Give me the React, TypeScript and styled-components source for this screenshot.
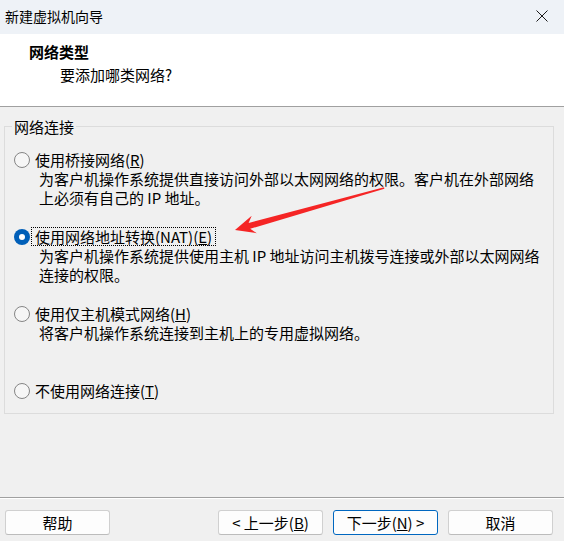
import React from 'react';
import styled, { createGlobalStyle } from 'styled-components';

const GlobalStyle = createGlobalStyle`
  html, body { margin: 0; padding: 0; background: #f0f0f0; }
  body { font-family: "Noto Sans CJK SC", "Noto Sans", sans-serif; color: #000; }
  * { box-sizing: border-box; }
`;

const Window = styled.div`
  position: relative;
  width: 564px;
  height: 541px;
  display: flex;
  flex-direction: column;
  background: #f0f0f0;
  overflow: hidden;
`;

const TitleBar = styled.div`
  height: 34px;
  flex: none;
  display: flex;
  align-items: center;
  justify-content: space-between;
  padding: 0 16px 2px 5px;
  background: #eef2f7;
  font-size: 14px;
  line-height: 18px;
`;

const CloseIcon = styled.svg`
  width: 12px;
  height: 12px;
  display: block;
`;

const Header = styled.div`
  height: 73px;
  flex: none;
  background: #fff;
  border-bottom: 1px solid #a0a0a0;
  padding: 8px 0 0 29px;
`;

const HeaderTitle = styled.div`
  font-size: 15px;
  font-weight: 700;
  line-height: 19px;
`;

const HeaderSub = styled.div`
  font-size: 15px;
  line-height: 19px;
  margin: 4px 0 0 31px;
`;

const Body = styled.div`
  flex: 1;
  padding: 10px 10px 0 4px;
`;

const Group = styled.fieldset`
  margin: 0;
  padding: 0;
  min-width: 0;
  border: 1px solid #dcdcdc;
`;

const Legend = styled.legend`
  margin-left: 7px;
  padding: 0 2px;
  font-size: 15px;
  line-height: 19px;
`;

const OptionList = styled.div`
  display: flex;
  flex-direction: column;
  gap: 20px;
  padding: 14px 0 13px 9px;
`;

const Option = styled.div`
  display: flex;
  flex-direction: column;
  min-height: 57px;
  &:last-child { min-height: 0; }
`;

const OptionRow = styled.div`
  display: flex;
  align-items: center;
  height: 19px;
`;

const Radio = styled.span<{ $checked?: boolean }>`
  position: relative;
  flex: none;
  width: 16px;
  height: 16px;
  border-radius: 50%;
  background: ${p => (p.$checked ? '#005fb8' : '#f6f6f6')};
  border: ${p => (p.$checked ? 'none' : '1px solid #858585')};
  &::after {
    content: '';
    display: ${p => (p.$checked ? 'block' : 'none')};
    position: absolute;
    inset: 5px;
    border-radius: 50%;
    background: #fff;
  }
`;

const OptionLabel = styled.span<{ $focused?: boolean }>`
  margin-left: 1px;
  padding: 0 3px;
  border: 1px dotted ${p => (p.$focused ? '#000' : 'transparent')};
  font-size: 15px;
  line-height: 17px;
  white-space: nowrap;
`;

const Desc = styled.div`
  margin-left: 25px;
  font-size: 15px;
  line-height: 19px;
`;

const Footer = styled.div`
  flex: none;
  height: 44px;
  border-top: 1px solid #a0a0a0;
  box-shadow: inset 0 1px 0 #fff;
  display: flex;
  align-items: flex-start;
  gap: 10px;
  padding: 12px 11px 0 5px;
`;

const Button = styled.button<{ $primary?: boolean; $pushLeft?: boolean }>`
  width: 105px;
  height: 25px;
  padding: 0;
  border-radius: 3px;
  border: 1px solid ${p => (p.$primary ? '#0067c0' : '#d0d0d0')};
  border-bottom-color: ${p => (p.$primary ? '#0067c0' : '#bcbcbc')};
  background: #fdfdfd;
  color: #000;
  font-family: inherit;
  font-size: 15px;
  line-height: 19px;
  margin-right: ${p => (p.$pushLeft ? 'auto' : '0')};
`;

const ArrowOverlay = styled.svg`
  position: absolute;
  left: 0;
  top: 0;
  width: 564px;
  height: 541px;
  pointer-events: none;
`;

type Opt = { label: React.ReactNode; desc: string[]; checked?: boolean };

const options: Opt[] = [
  {
    label: <>使用桥接网络(<u>R</u>)</>,
    desc: ['为客户机操作系统提供直接访问外部以太网网络的权限。客户机在外部网络', '上必须有自己的 IP 地址。'],
  },
  {
    label: <>使用网络地址转换(NAT)(<u>E</u>)</>,
    desc: ['为客户机操作系统提供使用主机 IP 地址访问主机拨号连接或外部以太网网络', '连接的权限。'],
    checked: true,
  },
  {
    label: <>使用仅主机模式网络(<u>H</u>)</>,
    desc: ['将客户机操作系统连接到主机上的专用虚拟网络。'],
  },
  {
    label: <>不使用网络连接(<u>T</u>)</>,
    desc: [],
  },
];

export default function App() {
  return (
    <>
      <GlobalStyle />
      <Window>
        <TitleBar>
          <span>新建虚拟机向导</span>
          <CloseIcon viewBox="0 0 12 12">
            <path d="M0.5 0.5 L11.5 11.5 M11.5 0.5 L0.5 11.5" stroke="#1a1a1a" strokeWidth="1" fill="none" />
          </CloseIcon>
        </TitleBar>
        <Header>
          <HeaderTitle>网络类型</HeaderTitle>
          <HeaderSub>要添加哪类网络?</HeaderSub>
        </Header>
        <Body>
          <Group>
            <Legend>网络连接</Legend>
            <OptionList>
              {options.map((o, i) => (
                <Option key={i}>
                  <OptionRow>
                    <Radio $checked={o.checked} />
                    <OptionLabel $focused={o.checked}>{o.label}</OptionLabel>
                  </OptionRow>
                  {o.desc.map((d, j) => (
                    <Desc key={j}>{d}</Desc>
                  ))}
                </Option>
              ))}
            </OptionList>
          </Group>
        </Body>
        <Footer>
          <Button $pushLeft>帮助</Button>
          <Button>&lt; 上一步(<u>B</u>)</Button>
          <Button $primary>下一步(<u>N</u>) &gt;</Button>
          <Button>取消</Button>
        </Footer>
        <ArrowOverlay viewBox="0 0 564 541">
          <polygon
            points="384,187.2 384.4,188.8 250.2,228.8 256.7,233.2 235,230 251.7,215.8 248.6,223"
            fill="#f52525"
          />
        </ArrowOverlay>
      </Window>
    </>
  );
}
